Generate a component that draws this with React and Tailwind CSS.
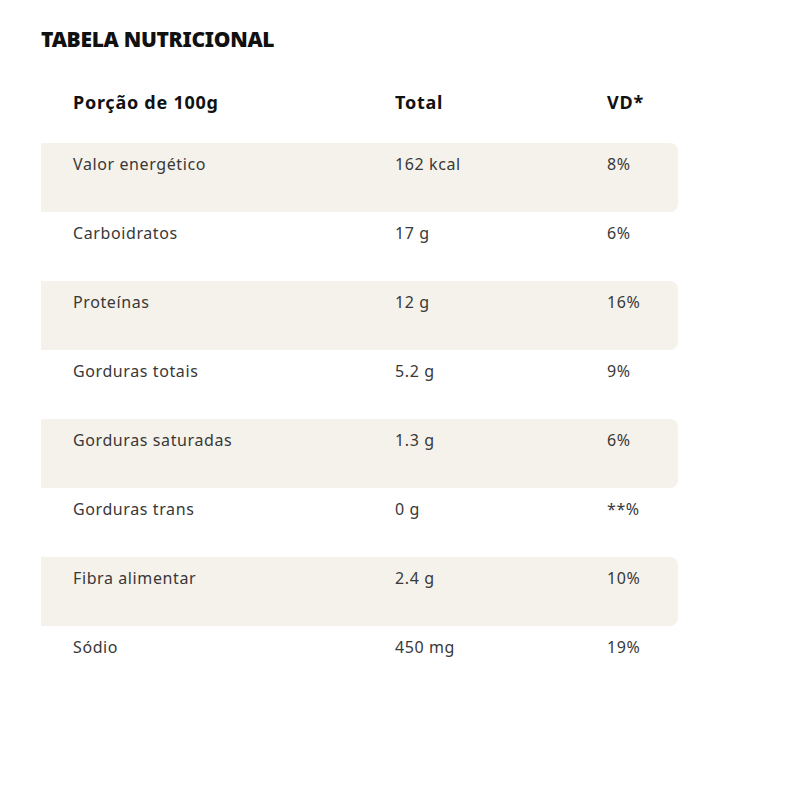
export default function App() {
  const rows = [
    ["Valor energético", "162 kcal", "8%"],
    ["Carboidratos", "17 g", "6%"],
    ["Proteínas", "12 g", "16%"],
    ["Gorduras totais", "5.2 g", "9%"],
    ["Gorduras saturadas", "1.3 g", "6%"],
    ["Gorduras trans", "0 g", "**%"],
    ["Fibra alimentar", "2.4 g", "10%"],
    ["Sódio", "450 mg", "19%"],
  ];
  return (
    <div className="min-h-[800px] w-[800px] bg-white pl-[41px] pt-[26px]" style={{ fontFamily: '"Noto Sans", sans-serif' }}>
      <h1 className="text-[21px] leading-[26px] font-black tracking-[-0.3px] text-[#111]">TABELA NUTRICIONAL</h1>
      <div className="w-[637px] mt-[36px]">
        <div className="grid grid-cols-[322px_212px_1fr] pl-8 h-[55px] pt-[2px] text-[18px] leading-[24px] font-bold tracking-[0.75px] text-[#111]">
          <div>Porção de 100g</div>
          <div>Total</div>
          <div>VD*</div>
        </div>
        {rows.map((r, i) => (
          <div
            key={i}
            className={`grid grid-cols-[322px_212px_1fr] pl-8 h-[69px] pt-[10px] text-[16px] leading-[22px] tracking-[0.6px] text-[#383838] ${i % 2 === 0 ? "bg-[#f5f2eb] rounded-r-lg" : ""}`}
          >
            <div>{r[0]}</div>
            <div>{r[1]}</div>
            <div>{r[2]}</div>
          </div>
        ))}
      </div>
    </div>
  );
}
